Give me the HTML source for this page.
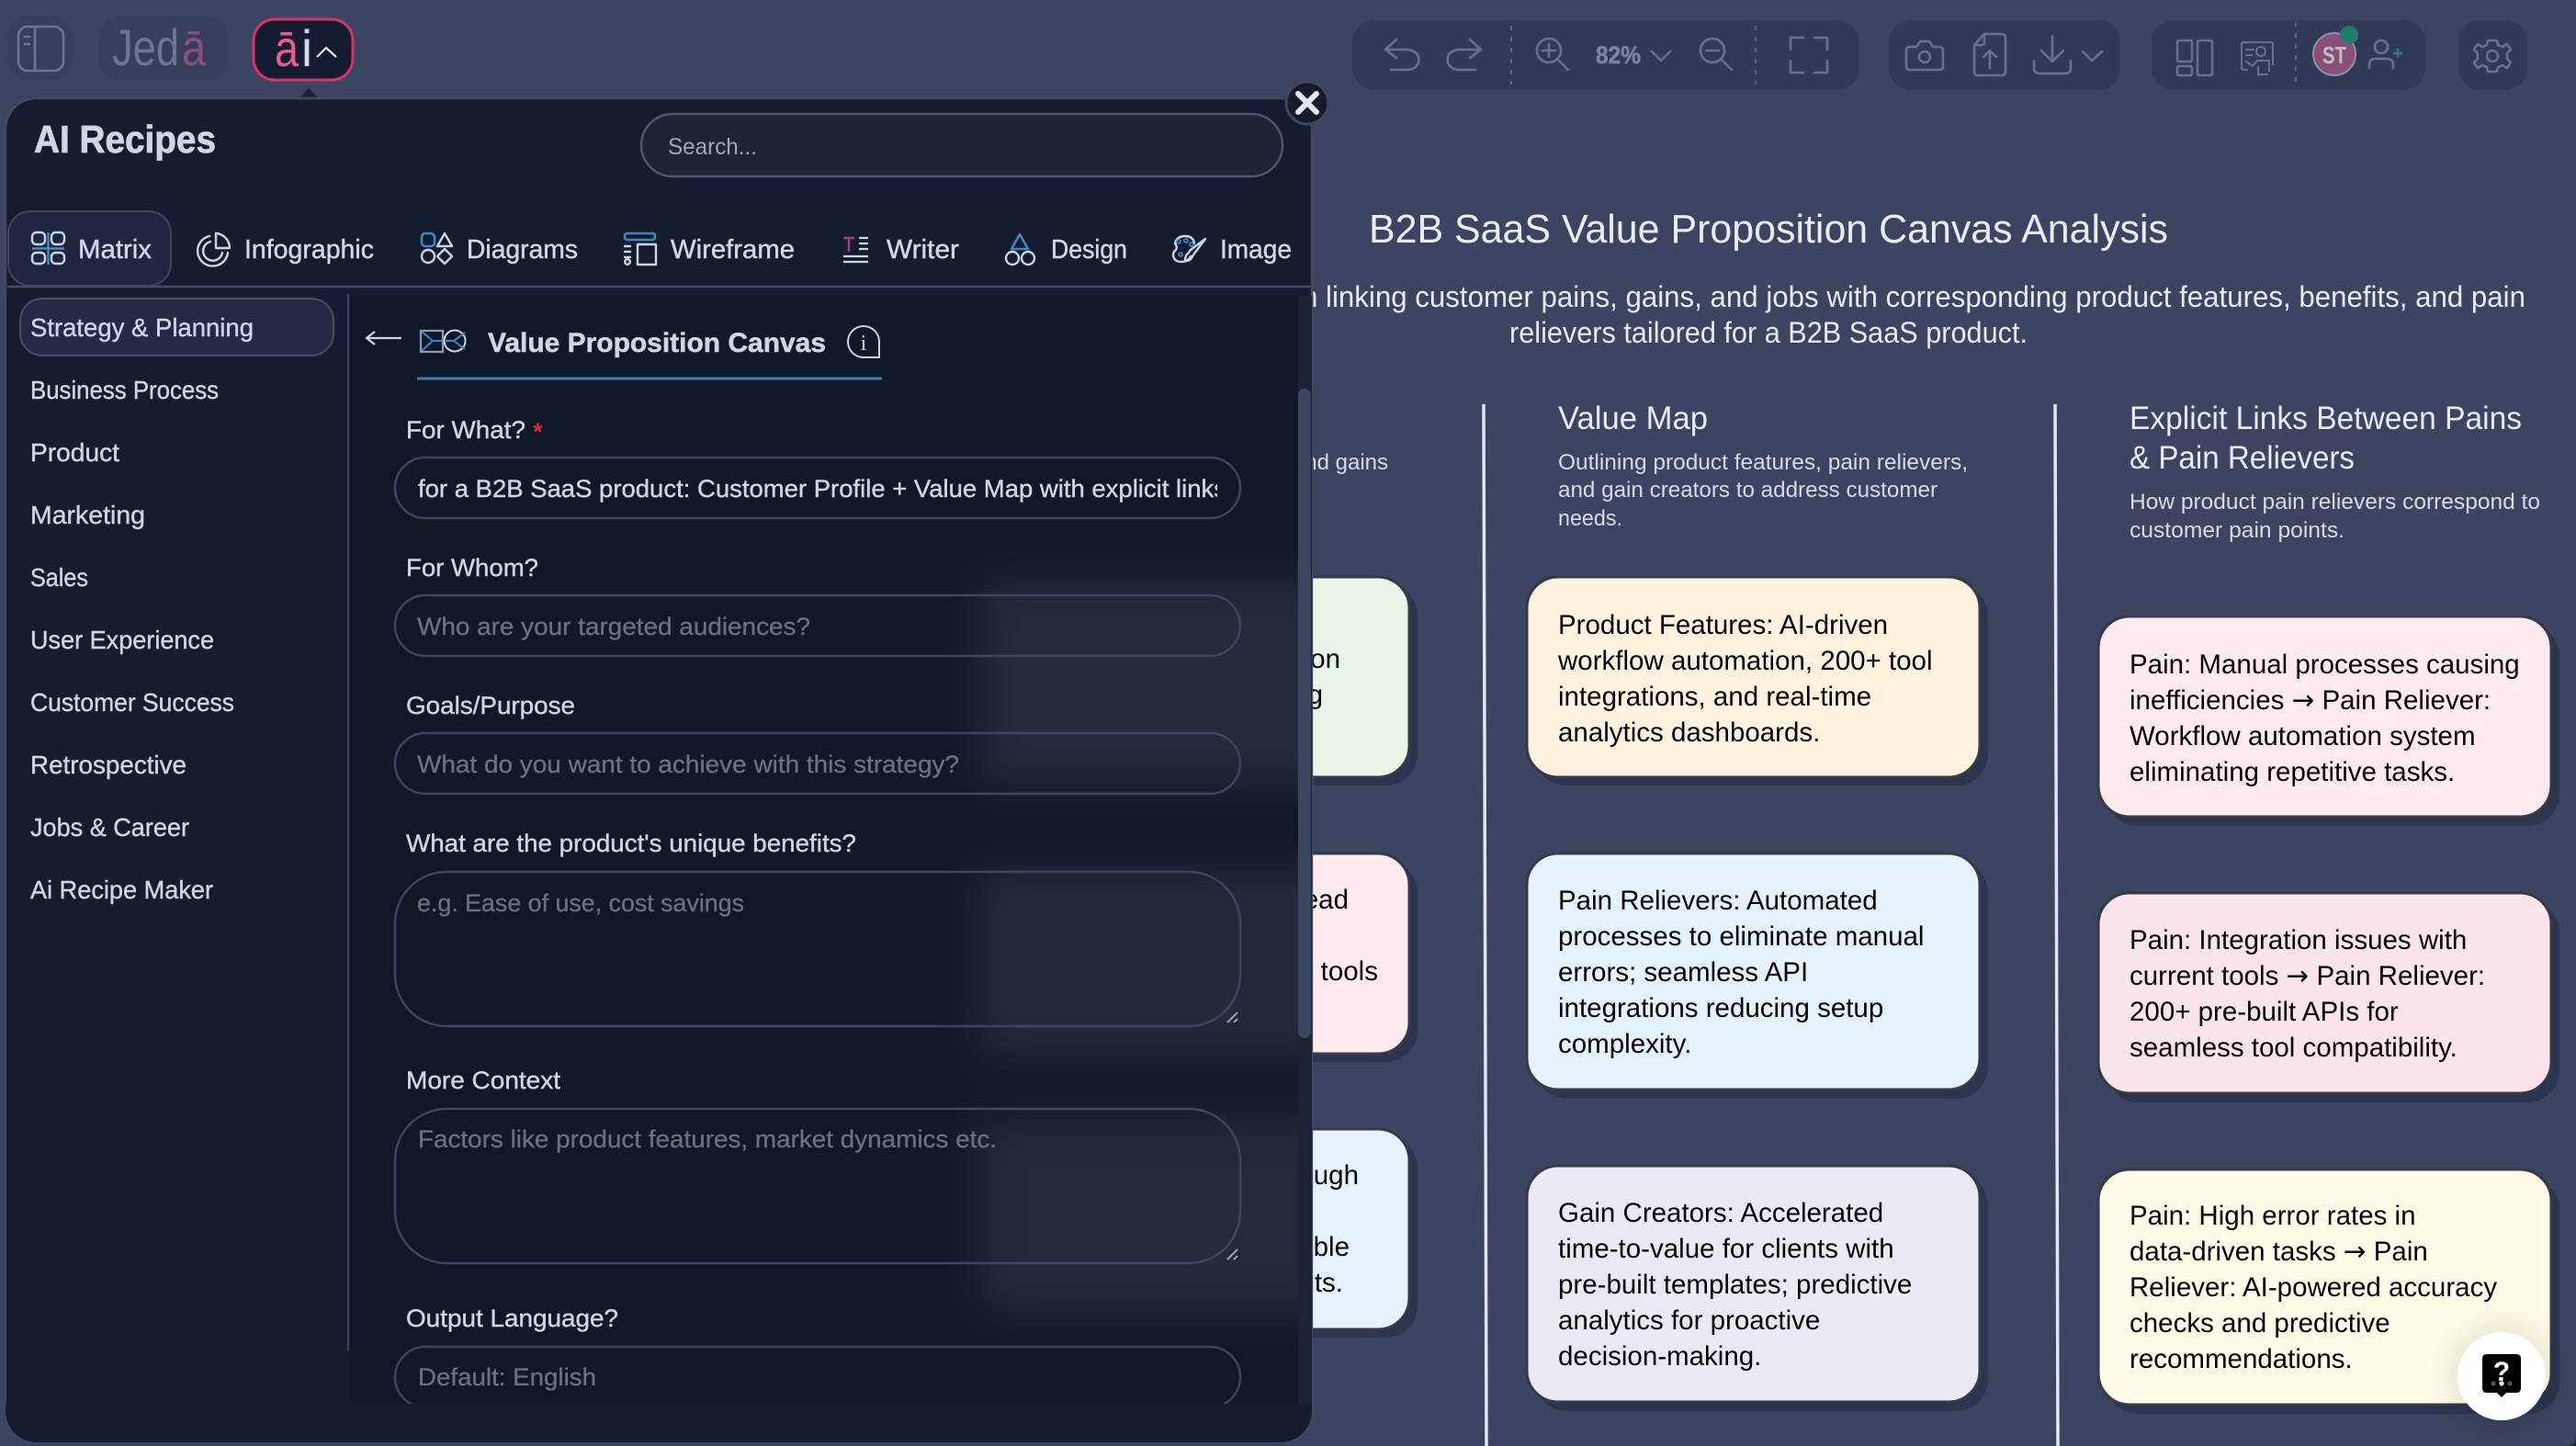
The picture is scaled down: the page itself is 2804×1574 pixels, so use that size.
<!DOCTYPE html>
<html lang="en">
<head>
<meta charset="utf-8">
<title>AI Recipes</title>
<style>
html,body{margin:0;padding:0;background:#3b4460;width:2804px;height:1574px;overflow:hidden}
svg{display:block;position:absolute;left:0;top:0}
text{font-family:"Liberation Sans",Arial,sans-serif}
.card{font-size:29.5px;fill:#000}
.ar{font-family:"DejaVu Sans",sans-serif}
.h{font-size:35px;fill:#e6ebf5}
.s{font-size:24px;fill:#d6dcea}
.tab{font-size:29px;fill:#cfd8e9;stroke:#cfd8e9;stroke-width:.45}
.side{font-size:28px;fill:#cdd6e8;stroke:#cdd6e8;stroke-width:.4}
.lab{font-size:27px;fill:#cdd6e8;stroke:#cdd6e8;stroke-width:.4}
.ph{font-size:27px;fill:#697185;stroke:#697185;stroke-width:.3}
.ic{fill:none;stroke:#cbd5e6;stroke-width:2.4;stroke-linecap:round;stroke-linejoin:round}
.bl{fill:none;stroke:#3f86c0;stroke-width:2.6;stroke-linecap:round;stroke-linejoin:round}
.tb{fill:none;stroke:#667090;stroke-width:2.6;stroke-linecap:round;stroke-linejoin:round}
.grp{fill:#303a57}
.fld{fill:none;stroke:#3d4660;stroke-width:2.4}
</style>
</head>
<body>
<svg width="2804" height="1574" viewBox="0 0 2804 1574" xmlns="http://www.w3.org/2000/svg">
<defs>
<filter id="bl" x="-30%" y="-30%" width="160%" height="160%"><feGaussianBlur stdDeviation="24"/></filter>
<filter id="glow" x="-50%" y="-50%" width="200%" height="200%"><feGaussianBlur stdDeviation="14"/></filter>
<clipPath id="form"><rect x="381" y="322" width="1032" height="1206"/></clipPath>
<clipPath id="inp"><rect x="440" y="500" width="885" height="60"/></clipPath>
<clipPath id="pan"><rect x="6" y="107" width="1422" height="1463" rx="34"/></clipPath>
</defs>
<rect width="2804" height="1574" fill="#3b4460"/>

<!-- top bar left -->
<rect x="8" y="17" width="72" height="70" rx="24" fill="#353e5a"/>
<rect x="20" y="29" width="49" height="48" rx="10" fill="none" stroke="#6c7591" stroke-width="2.6"/>
<path d="M38 30V76M27 40h5M27 48h5" stroke="#6c7591" stroke-width="2.6" fill="none" stroke-linecap="round"/>
<rect x="108" y="18" width="140" height="70" rx="24" fill="#353e5a"/>
<text x="122" y="71" font-size="56" fill="#6c7591" textLength="73" lengthAdjust="spacingAndGlyphs">Jed</text>
<text x="198" y="71" font-size="56" fill="#8a4f7f" textLength="26" lengthAdjust="spacingAndGlyphs">ā</text>
<rect x="276" y="21" width="108" height="66" rx="23" fill="#151b30" stroke="#d6336c" stroke-width="3"/>
<text x="299" y="72" font-size="56" fill="#e85d8f" textLength="26" lengthAdjust="spacingAndGlyphs">ā</text>
<text x="328" y="72" font-size="56" fill="#d5d9ea" textLength="12" lengthAdjust="spacingAndGlyphs">i</text>
<path d="M345 62L355 52L366 62" fill="none" stroke="#e6e9f2" stroke-width="2.2"/>
<path d="M325 108L336 96L348 108Z" fill="#1b2237"/>

<!-- toolbars -->
<rect class="grp" x="1472" y="22" width="551" height="76" rx="24"/>
<rect class="grp" x="2056" y="22" width="252" height="76" rx="24"/>
<rect class="grp" x="2342" y="22" width="298" height="76" rx="24"/>
<rect class="grp" x="2676" y="22" width="75" height="76" rx="24"/>

<path class="tb" d="M1520 43L1508 54L1520 63M1508 54H1531C1549 54 1549 76 1531 76H1514"/>
<path class="tb" d="M1600 43L1612 54L1600 63M1612 54H1589C1571 54 1571 76 1589 76H1606"/>
<path d="M1645 28V92M1911 28V92M2499 24V90" stroke="#667090" stroke-width="1.6" stroke-dasharray="5 7" fill="none"/>
<circle class="tb" cx="1686" cy="55" r="13"/>
<path class="tb" d="M1696 65L1707 76M1686 48V62M1679 55H1693"/>
<text x="1737" y="69" font-size="27" font-weight="bold" fill="#7a84a0" stroke="#7a84a0" stroke-width=".5" textLength="49" lengthAdjust="spacingAndGlyphs">82%</text>
<path class="tb" d="M1798 56L1808 66L1818 56"/>
<circle class="tb" cx="1864" cy="55" r="13"/>
<path class="tb" d="M1874 65L1885 76M1857 55H1871"/>
<path class="tb" d="M1949 54V41H1963M1975 41H1989V54M1949 66V79H1963M1975 79H1989V66"/>

<path class="tb" d="M2075 54Q2075 51 2079 51H2086L2090 45H2100L2104 51H2110Q2115 51 2115 55V72Q2115 76 2111 76H2079Q2075 76 2075 72Z"/>
<circle class="tb" cx="2095" cy="62" r="6"/>
<path class="tb" d="M2160 37H2178Q2183 37 2183 41V78Q2183 82 2178 82H2153Q2149 82 2149 78V49ZM2149 49H2157Q2160 49 2160 46V37M2166 74V55M2159 62L2166 55L2173 62"/>
<path class="tb" d="M2234 39V67M2222 55L2234 67L2246 55M2214 66V74Q2214 80 2220 80H2248Q2254 80 2254 74V66"/>
<path class="tb" d="M2267 56L2277 66L2288 56"/>

<rect class="tb" x="2370" y="44" width="16" height="23" rx="2"/>
<rect class="tb" x="2370" y="72" width="16" height="10" rx="2"/>
<rect class="tb" x="2392" y="44" width="16" height="38" rx="2"/>
<path d="M2447 76H2442Q2440 76 2440 73V48Q2440 46 2442 46H2472Q2474 46 2474 48V71M2444 54H2454M2444 60H2452M2444 66L2452 72L2457 66H2470V78M2458 72V81H2469" fill="none" stroke="#667090" stroke-width="2"/>
<circle cx="2461" cy="56" r="5" fill="none" stroke="#667090" stroke-width="2"/>
<ellipse cx="2541" cy="59" rx="23" ry="23" fill="#8a4f78" stroke="#8f8ea6" stroke-width="2"/>
<text x="2528" y="69" font-size="26" font-weight="bold" fill="#c3bdcb" textLength="26" lengthAdjust="spacingAndGlyphs">ST</text>
<circle cx="2557" cy="38" r="10" fill="#217a6c"/>
<circle class="tb" cx="2592" cy="51" r="7" stroke-width="2.2"/>
<path class="tb" d="M2579 74V71Q2579 64 2586 64H2598Q2605 64 2605 71V74" stroke-width="2.2"/>
<path d="M2610 53V63M2605 58H2615" stroke="#2f7f85" stroke-width="2.4"/>
<path class="tb" stroke-width="2.2" d="M2708 44H2718L2719 49L2724 51L2729 48L2733 54L2729 58V64L2733 68L2729 74L2724 71L2719 73L2718 78H2708L2707 73L2702 71L2697 74L2693 68L2697 64V58L2693 54L2697 48L2702 51L2707 49Z"/>
<circle class="tb" cx="2713" cy="61" r="6" stroke-width="2.2"/>

<!-- canvas text -->
<text x="1490" y="264" font-size="44" fill="#e9edf6" textLength="870" lengthAdjust="spacingAndGlyphs">B2B SaaS Value Proposition Canvas Analysis</text>
<text x="1417" y="334" font-size="32" fill="#e6ebf5" textLength="1332" lengthAdjust="spacingAndGlyphs">n linking customer pains, gains, and jobs with corresponding product features, benefits, and pain</text>
<text x="1643" y="373" font-size="32" fill="#e6ebf5" textLength="564" lengthAdjust="spacingAndGlyphs">relievers tailored for a B2B SaaS product.</text>

<path d="M1615 440L1618 1574" stroke="#dfe6f5" stroke-width="3.5"/>
<path d="M2237 440L2240 1574" stroke="#dfe6f5" stroke-width="3.5"/>

<text class="s" x="1511" y="511" text-anchor="end">and gains</text>
<text class="h" x="1696" y="467" textLength="163" lengthAdjust="spacingAndGlyphs">Value Map</text>
<text class="s" x="1696" y="511" textLength="446" lengthAdjust="spacingAndGlyphs">Outlining product features, pain relievers,</text>
<text class="s" x="1696" y="541" textLength="413" lengthAdjust="spacingAndGlyphs">and gain creators to address customer</text>
<text class="s" x="1696" y="572" textLength="70" lengthAdjust="spacingAndGlyphs">needs.</text>
<text class="h" x="2318" y="467" textLength="427" lengthAdjust="spacingAndGlyphs">Explicit Links Between Pains</text>
<text class="h" x="2318" y="510" textLength="245" lengthAdjust="spacingAndGlyphs">&amp; Pain Relievers</text>
<text class="s" x="2318" y="554" textLength="447" lengthAdjust="spacingAndGlyphs">How product pain relievers correspond to</text>
<text class="s" x="2318" y="585" textLength="234" lengthAdjust="spacingAndGlyphs">customer pain points.</text>

<!-- card shadows + cards -->
<g fill="#2c3550">
<rect x="1123" y="636" width="420" height="219" rx="34"/>
<rect x="1123" y="937" width="420" height="219" rx="34"/>
<rect x="1123" y="1237" width="420" height="219" rx="34"/>
<rect x="1671" y="637" width="493" height="218" rx="34"/>
<rect x="1671" y="938" width="493" height="258" rx="34"/>
<rect x="1671" y="1278" width="493" height="258" rx="34"/>
<rect x="2293" y="680" width="493" height="219" rx="34"/>
<rect x="2293" y="981" width="493" height="219" rx="34"/>
<rect x="2293" y="1282" width="493" height="257" rx="34"/>
</g>
<g stroke="#363a46" stroke-width="3">
<rect x="1115" y="628" width="419" height="218" rx="34" fill="#e8f5e9"/>
<rect x="1115" y="929" width="419" height="218" rx="34" fill="#ffebee"/>
<rect x="1115" y="1229" width="419" height="218" rx="34" fill="#e3f2fd"/>
<rect x="1662" y="628" width="493" height="218" rx="34" fill="#fff3e0"/>
<rect x="1662" y="929" width="493" height="257" rx="34" fill="#e3f2fd"/>
<rect x="1662" y="1269" width="493" height="257" rx="34" fill="#e8eaf6"/>
<rect x="2284" y="671" width="493" height="218" rx="34" fill="#ffebee"/>
<rect x="2284" y="972" width="493" height="218" rx="34" fill="#fce4ec"/>
<rect x="2284" y="1273" width="493" height="256" rx="34" fill="#fffde7"/>
</g>

<g class="card">
<text class="card" x="1459" y="727" text-anchor="end">on</text>
<text class="card" x="1440" y="766" text-anchor="end">g</text>
<text class="card" x="1468" y="989" text-anchor="end">ead</text>
<text class="card" x="1500" y="1067" text-anchor="end">tools</text>
<text class="card" x="1479" y="1289" text-anchor="end">ugh</text>
<text class="card" x="1469" y="1367" text-anchor="end">ble</text>
<text class="card" x="1462" y="1406" text-anchor="end">ts.</text>

<text class="card" x="1696" y="690">Product Features: AI-driven</text>
<text class="card" x="1696" y="729">workflow automation, 200+ tool</text>
<text class="card" x="1696" y="768">integrations, and real-time</text>
<text class="card" x="1696" y="807">analytics dashboards.</text>

<text class="card" x="1696" y="990">Pain Relievers: Automated</text>
<text class="card" x="1696" y="1029">processes to eliminate manual</text>
<text class="card" x="1696" y="1068">errors; seamless API</text>
<text class="card" x="1696" y="1107">integrations reducing setup</text>
<text class="card" x="1696" y="1146">complexity.</text>

<text class="card" x="1696" y="1330">Gain Creators: Accelerated</text>
<text class="card" x="1696" y="1369">time-to-value for clients with</text>
<text class="card" x="1696" y="1408">pre-built templates; predictive</text>
<text class="card" x="1696" y="1447">analytics for proactive</text>
<text class="card" x="1696" y="1486">decision-making.</text>

<text class="card" x="2318" y="733">Pain: Manual processes causing</text>
<text class="card" x="2318" y="772">inefficiencies <tspan class="ar">→</tspan> Pain Reliever:</text>
<text class="card" x="2318" y="811">Workflow automation system</text>
<text class="card" x="2318" y="850">eliminating repetitive tasks.</text>

<text class="card" x="2318" y="1033">Pain: Integration issues with</text>
<text class="card" x="2318" y="1072">current tools <tspan class="ar">→</tspan> Pain Reliever:</text>
<text class="card" x="2318" y="1111">200+ pre-built APIs for</text>
<text class="card" x="2318" y="1150">seamless tool compatibility.</text>

<text class="card" x="2318" y="1333">Pain: High error rates in</text>
<text class="card" x="2318" y="1372">data-driven tasks <tspan class="ar">→</tspan> Pain</text>
<text class="card" x="2318" y="1411">Reliever: AI-powered accuracy</text>
<text class="card" x="2318" y="1450">checks and predictive</text>
<text class="card" x="2318" y="1489">recommendations.</text>
</g>

<!-- help button -->
<circle cx="2723" cy="1498" r="62" fill="#000" opacity=".08" filter="url(#glow)"/>
<ellipse cx="2723" cy="1498" rx="48" ry="48" fill="#fff"/>
<path d="M2707 1474H2739Q2744 1474 2744 1479V1511Q2744 1516 2739 1516H2728L2723 1521L2718 1516H2707Q2702 1516 2702 1511V1479Q2702 1474 2707 1474Z" fill="#000"/>
<text x="2723" y="1503" font-size="30" font-weight="bold" fill="#fff" text-anchor="middle">?</text>
<circle cx="2714" cy="1506" r="2.6" fill="#555"/><circle cx="2723" cy="1506" r="2.6" fill="#fff"/><circle cx="2732" cy="1506" r="2.6" fill="#555"/>
<path d="M2792 1574Q2804 1574 2804 1562V1574Z" fill="#20283c"/>

<!-- panel -->
<rect x="6" y="107" width="1422" height="1463" rx="34" fill="#151c30" stroke="#414a65" stroke-width="2.4"/>
<g clip-path="url(#pan)">
<rect x="381" y="322" width="1047" height="1206" fill="#0f1829"/>
<g clip-path="url(#form)">
<g filter="url(#bl)" opacity=".085">
<rect x="1065" y="630" width="460" height="225" fill="#e8f5e9"/>
<rect x="1065" y="945" width="460" height="205" fill="#ffe0e4"/>
<rect x="1065" y="1215" width="460" height="215" fill="#d8ecfb"/>
</g>
</g>
<rect x="1413" y="322" width="15" height="1206" fill="#1a2236"/>
<rect x="6" y="1528" width="1422" height="44" fill="#141c30"/>
<rect x="7" y="322" width="372" height="1250" fill="#151c30"/>
</g>
<rect x="1413" y="423" width="14" height="707" rx="7" fill="#3a4560"/>
<path d="M8 312H1428" stroke="#424b66" stroke-width="2.4"/>
<path d="M379 320V1470" stroke="#3c4560" stroke-width="2"/>

<!-- close -->
<circle cx="1423" cy="112" r="23" fill="#161b2c" stroke="#3d4662" stroke-width="3"/>
<path d="M1413 102L1433 122M1433 102L1413 122" stroke="#e4e6f0" stroke-width="6" stroke-linecap="round"/>

<!-- header -->
<text x="37" y="166" font-size="42" font-weight="bold" fill="#cdd6e8" stroke="#cdd6e8" stroke-width=".8" textLength="198" lengthAdjust="spacingAndGlyphs">AI Recipes</text>
<rect x="698" y="124" width="698" height="68" rx="34" fill="#1f2435" stroke="#4f5770" stroke-width="2.4"/>
<text x="727" y="168" font-size="25" fill="#a0a7b8" textLength="97" lengthAdjust="spacingAndGlyphs">Search...</text>

<!-- tabs -->
<rect x="9" y="230" width="177" height="81" rx="24" fill="#1f2740" stroke="#3d4660" stroke-width="2"/>
<g class="ic">
<rect x="35" y="253" width="14" height="13" rx="4.5"/><rect x="56" y="253" width="14" height="13" rx="4.5"/>
<rect x="35" y="275" width="14" height="12" rx="4.5"/><rect x="56" y="275" width="14" height="12" rx="4.5"/>
</g>
<path d="M52.5 253V288M35 270.5H70" stroke="#4b8fc7" stroke-width="2.2" fill="none"/>
<text class="tab" x="85" y="281" textLength="80" lengthAdjust="spacingAndGlyphs">Matrix</text>

<g class="ic">
<path d="M235 254V270H250A16 16 0 0 0 235 254Z"/>
<path d="M228 257A16.500 16.500 0 1 0 248 275"/>
<path d="M229 263A10.500 10.500 0 1 0 242 275"/>
</g>
<text class="tab" x="266" y="281" textLength="141" lengthAdjust="spacingAndGlyphs">Infographic</text>

<rect class="bl" x="459" y="254" width="14" height="14" rx="4"/>
<g class="ic">
<path d="M484 254L476 268H492Z"/><circle cx="466" cy="279" r="7"/><path d="M484 271L492 279L484 287L476 279Z"/>
</g>
<text class="tab" x="508" y="281" textLength="121" lengthAdjust="spacingAndGlyphs">Diagrams</text>

<rect class="bl" x="680" y="254" width="33" height="7" rx="2.500"/>
<g class="ic">
<path d="M680 268H686M680 274H686M680 280H686"/><circle cx="683" cy="285" r="2.800"/><rect x="694" y="266" width="20" height="22"/>
</g>
<text class="tab" x="730" y="281" textLength="135" lengthAdjust="spacingAndGlyphs">Wireframe</text>

<path d="M918 259H930M924 259V274" stroke="#a73c80" stroke-width="2.4" fill="none"/>
<path d="M935 259H945M935 265H945M935 271H945M918 279H945M918 285H945" stroke="#cbd5e6" stroke-width="2.2" fill="none"/>
<text class="tab" x="965" y="281" textLength="79" lengthAdjust="spacingAndGlyphs">Writer</text>

<path class="bl" d="M1110 255L1101 271H1119Z"/>
<g class="ic"><ellipse cx="1102" cy="281" rx="7" ry="7"/><ellipse cx="1119" cy="281" rx="7" ry="7"/></g>
<text class="tab" x="1144" y="281" textLength="83" lengthAdjust="spacingAndGlyphs">Design</text>

<g class="ic" stroke-width="2">
<path d="M1300 265Q1299 257 1290 257Q1281 257 1279 265Q1282 269 1280 272Q1277 274 1277 278Q1278 285 1286 285Q1293 285 1296 279"/>
<path d="M1312 260L1296 272L1293 276Q1290 278 1290 284Q1296 284 1298 279L1300 276Z"/>
</g>
<g fill="none" stroke="#3f86c0" stroke-width="1.8"><circle cx="1283" cy="263" r="2"/><circle cx="1291" cy="262" r="2"/><circle cx="1297" cy="266" r="2"/><circle cx="1285" cy="277" r="2"/></g>
<text class="tab" x="1328" y="281" textLength="78" lengthAdjust="spacingAndGlyphs">Image</text>

<!-- sidebar -->
<rect x="22" y="325" width="341" height="62" rx="24" fill="#232a45" stroke="#454e6a" stroke-width="2"/>
<text class="side" x="33" y="366" textLength="243" lengthAdjust="spacingAndGlyphs">Strategy &amp; Planning</text>
<text class="side" x="33" y="434" textLength="205" lengthAdjust="spacingAndGlyphs">Business Process</text>
<text class="side" x="33" y="502" textLength="97" lengthAdjust="spacingAndGlyphs">Product</text>
<text class="side" x="33" y="570" textLength="125" lengthAdjust="spacingAndGlyphs">Marketing</text>
<text class="side" x="33" y="638" textLength="63" lengthAdjust="spacingAndGlyphs">Sales</text>
<text class="side" x="33" y="706" textLength="200" lengthAdjust="spacingAndGlyphs">User Experience</text>
<text class="side" x="33" y="774" textLength="222" lengthAdjust="spacingAndGlyphs">Customer Success</text>
<text class="side" x="33" y="842" textLength="170" lengthAdjust="spacingAndGlyphs">Retrospective</text>
<text class="side" x="33" y="910" textLength="173" lengthAdjust="spacingAndGlyphs">Jobs &amp; Career</text>
<text class="side" x="33" y="978" textLength="199" lengthAdjust="spacingAndGlyphs">Ai Recipe Maker</text>

<!-- form head -->
<path d="M437 368H399M408 361L399 368L408 375" fill="none" stroke="#cbd5e6" stroke-width="2.2"/>
<rect x="458" y="360" width="24" height="23" fill="none" stroke="#8f9ab3" stroke-width="2.2"/>
<path d="M459 361L471 371L459 382M471 371H482" fill="none" stroke="#3f86c0" stroke-width="2"/>
<circle cx="495" cy="371" r="11.500" fill="none" stroke="#cbd5e6" stroke-width="2"/>
<path d="M506 362L494 371L506 380M484 371H494" fill="none" stroke="#3f86c0" stroke-width="2"/>
<text x="531" y="383" font-size="30" font-weight="bold" fill="#cdd6e8" stroke="#cdd6e8" stroke-width=".5" textLength="368" lengthAdjust="spacingAndGlyphs">Value Proposition Canvas</text>
<path d="M940 355A17 17 0 0 0 940 389H957V372A17 17 0 0 0 940 355Z" fill="none" stroke="#cbd5e6" stroke-width="2"/>
<text x="940" y="381" font-size="24" text-anchor="middle" style="font-family:'Liberation Serif',serif" fill="#cbd5e6">i</text>
<path d="M454 412H960" stroke="#3f7fb5" stroke-width="3"/>

<!-- form -->
<g clip-path="url(#form)">
<text class="lab" x="442" y="477" textLength="130" lengthAdjust="spacingAndGlyphs">For What?</text>
<text x="580" y="479" font-size="27" font-weight="bold" fill="#d42b2b">*</text>
<rect class="fld" x="430" y="498" width="920" height="66" rx="33"/>
<g clip-path="url(#inp)"><text class="lab" x="455" y="541" textLength="880" lengthAdjust="spacingAndGlyphs">for a B2B SaaS product: Customer Profile + Value Map with explicit links</text></g>

<text class="lab" x="442" y="627" textLength="144" lengthAdjust="spacingAndGlyphs">For Whom?</text>
<rect class="fld" x="430" y="648" width="920" height="66" rx="33"/>
<text class="ph" x="454" y="691" textLength="428" lengthAdjust="spacingAndGlyphs">Who are your targeted audiences?</text>

<text class="lab" x="442" y="777" textLength="184" lengthAdjust="spacingAndGlyphs">Goals/Purpose</text>
<rect class="fld" x="430" y="798" width="920" height="66" rx="33"/>
<text class="ph" x="454" y="841" textLength="590" lengthAdjust="spacingAndGlyphs">What do you want to achieve with this strategy?</text>

<text class="lab" x="442" y="927" textLength="490" lengthAdjust="spacingAndGlyphs">What are the product's unique benefits?</text>
<rect class="fld" x="430" y="949" width="920" height="168" rx="56"/>
<text class="ph" x="454" y="992" textLength="356" lengthAdjust="spacingAndGlyphs">e.g. Ease of use, cost savings</text>
<path d="M1336 1113L1347 1102M1343 1113L1347 1109" stroke="#aab0bf" stroke-width="1.8"/>

<text class="lab" x="442" y="1185" textLength="168" lengthAdjust="spacingAndGlyphs">More Context</text>
<rect class="fld" x="430" y="1207" width="920" height="168" rx="56"/>
<text class="ph" x="455" y="1249" textLength="630" lengthAdjust="spacingAndGlyphs">Factors like product features, market dynamics etc.</text>
<path d="M1336 1371L1347 1360M1343 1371L1347 1367" stroke="#aab0bf" stroke-width="1.8"/>

<text class="lab" x="442" y="1444" textLength="231" lengthAdjust="spacingAndGlyphs">Output Language?</text>
<rect class="fld" x="430" y="1466" width="920" height="66" rx="33"/>
<text class="ph" x="455" y="1508" textLength="194" lengthAdjust="spacingAndGlyphs">Default: English</text>
</g>
</svg>
</body>
</html>
